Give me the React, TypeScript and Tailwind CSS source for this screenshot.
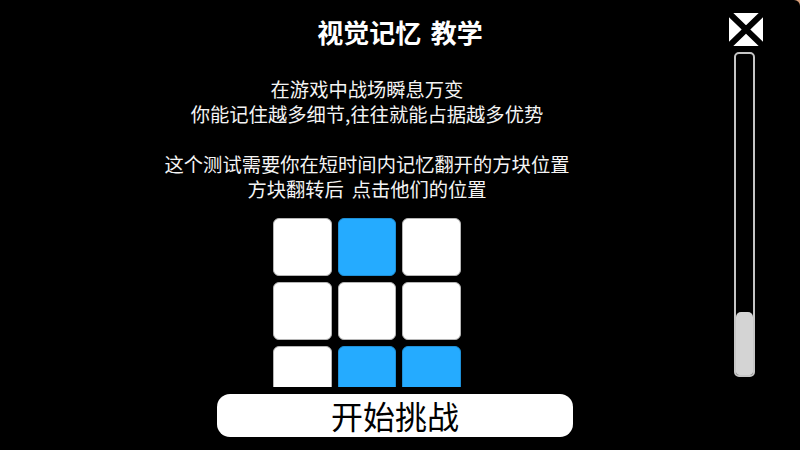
import React from 'react';

const tiles = [false, true, false, false, false, false, false, true, true];

function CloseIcon() {
  return (
    <svg width="34" height="33" viewBox="0 0 34 33">
      <rect x="0" y="0" width="34" height="33" fill="#ffffff" />
      <path d="M0 0 L34 33 M34 0 L0 33" stroke="#000000" strokeWidth="6" />
    </svg>
  );
}

export default function App() {
  return (
    <div
      className="w-[800px] h-[450px] bg-[#d9a07c] overflow-hidden"
      style={{ fontFamily: '"Noto Sans CJK SC", "Noto Sans", sans-serif' }}
    >
      <div className="w-full h-full bg-black rounded-tr-[6px] flex flex-col text-white [word-spacing:0.22em]">
        {/* Header */}
        <div className="h-[52px] grid grid-cols-[1fr_auto_1fr] items-start">
          <div />
          <h1 className="pt-[15px] text-[26px] leading-[34px] font-semibold">视觉记忆 教学</h1>
          <div className="flex justify-end">
            <button className="mt-[13px] mr-[37px] w-[34px] h-[33px] block">
              <CloseIcon />
            </button>
          </div>
        </div>

        {/* Body */}
        <div className="h-[335px] flex">
          <div className="flex-1 overflow-hidden flex flex-col items-center">
            <div className="pt-[25px] text-center text-[19.3px] leading-[25px] text-[#f4f4f4]">
              <p>在游戏中战场瞬息万变</p>
              <p>你能记住越多细节,往往就能占据越多优势</p>
              <p>&nbsp;</p>
              <p>这个测试需要你在短时间内记忆翻开的方块位置</p>
              <p>方块翻转后 点击他们的位置</p>
            </div>
            <div className="mt-[16px] grid grid-cols-[58.5px_58.5px_58.5px] gap-[6px] shrink-0">
              {tiles.map((on, i) => (
                <div
                  key={i}
                  className={
                    on
                      ? 'w-[58.5px] h-[58px] rounded-[6px] bg-[#25abff] border border-[#1e8fd6]'
                      : 'w-[58.5px] h-[58px] rounded-[6px] bg-white border border-[#b5b5b5]'
                  }
                />
              ))}
            </div>
          </div>

          {/* Scrollbar */}
          <div className="w-[21px] mr-[45px] h-[325px] rounded-[5px] border-2 border-[#c6c6c6] bg-black flex flex-col justify-end overflow-hidden">
            <div className="h-[63px] bg-[#d4d4d4] rounded-t-[5px]" />
          </div>
        </div>

        {/* Footer */}
        <div className="flex-1 pt-[7px]">
          <button className="ml-[217px] w-[356px] h-[43px] rounded-[13px] bg-white text-black text-[32px] leading-[43px]">
            开始挑战
          </button>
        </div>
      </div>
    </div>
  );
}
